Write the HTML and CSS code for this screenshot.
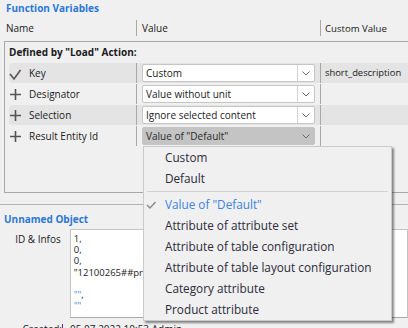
FILE: index.html
```html
<!DOCTYPE html>
<html>
<head>
<meta charset="utf-8">
<link rel="stylesheet" href="styles.css">
</head>
<body>
<section class="fv">
  <h2 class="title">Function Variables</h2>
  <div class="colhead">
    <div class="ch-name">Name</div>
    <div class="ch-sep"></div>
    <div class="ch-value">Value</div>
    <div class="ch-sep"></div>
    <div class="ch-custom">Custom Value</div>
  </div>
  <div class="table">
    <div class="group">Defined by "Load" Action:</div>
    <div class="rows">
      <div class="row hl">
        <div class="cell-name">
          <svg class="ico" width="14" height="20" viewBox="0 0 14 20"><polyline points="1,11 5,16 11.5,7" fill="none" stroke="#555" stroke-width="1.6"/></svg>
          <span>Key</span>
        </div>
        <div class="cell-value">
          <div class="combo"><span class="ctext">Custom</span><span class="arrow"><svg width="8" height="5" viewBox="0 0 8 5"><polyline points="0.5,0.5 4,4 7.5,0.5" fill="none" stroke="#6a6a6a" stroke-width="1"/></svg></span></div>
        </div>
        <div class="cell-custom">short_description</div>
      </div>
      <div class="row">
        <div class="cell-name">
          <svg class="ico" width="14" height="20" viewBox="0 0 14 20"><path d="M1 10.5H12M6.5 5V16" fill="none" stroke="#555" stroke-width="1.6"/></svg>
          <span>Designator</span>
        </div>
        <div class="cell-value">
          <div class="combo"><span class="ctext">Value without unit</span><span class="arrow"><svg width="8" height="5" viewBox="0 0 8 5"><polyline points="0.5,0.5 4,4 7.5,0.5" fill="none" stroke="#6a6a6a" stroke-width="1"/></svg></span></div>
        </div>
        <div class="cell-custom"></div>
      </div>
      <div class="row hl">
        <div class="cell-name">
          <svg class="ico" width="14" height="20" viewBox="0 0 14 20"><path d="M1 10.5H12M6.5 5V16" fill="none" stroke="#555" stroke-width="1.6"/></svg>
          <span>Selection</span>
        </div>
        <div class="cell-value">
          <div class="combo"><span class="ctext">Ignore selected content</span><span class="arrow"><svg width="8" height="5" viewBox="0 0 8 5"><polyline points="0.5,0.5 4,4 7.5,0.5" fill="none" stroke="#6a6a6a" stroke-width="1"/></svg></span></div>
        </div>
        <div class="cell-custom"></div>
      </div>
      <div class="row">
        <div class="cell-name">
          <svg class="ico" width="14" height="20" viewBox="0 0 14 20"><path d="M1 10.5H12M6.5 5V16" fill="none" stroke="#555" stroke-width="1.6"/></svg>
          <span>Result Entity Id</span>
        </div>
        <div class="cell-value">
          <div class="combo open"><span class="ctext">Value of "Default"</span><span class="arrow"><svg width="8" height="5" viewBox="0 0 8 5"><polyline points="0.5,0.5 4,4 7.5,0.5" fill="none" stroke="#6a6a6a" stroke-width="1"/></svg></span></div>
        </div>
        <div class="cell-custom"></div>
      </div>
    </div>
  </div>
</section>

<section class="obj">
  <h2 class="title obj-title">Unnamed Object</h2>
  <div class="field">
    <div class="label">ID &amp; Infos</div>
    <div class="ta">1,<br>0,<br>0,<br>"12100265##product_attribute_default<br>&nbsp;<br><span class="q">""</span>,<br><span class="q">""</span></div>
  </div>
  <div class="field created">
    <div class="label">Created:</div>
    <div class="caret"></div>
    <div class="val">05.07.2022 10:53 Admin</div>
  </div>
</section>

<div class="menu">
  <div class="item">Custom</div>
  <div class="item">Default</div>
  <div class="sep"></div>
  <div class="item sel"><svg class="mcheck" width="14" height="21" viewBox="0 0 14 21"><polyline points="3,11 6,14 11.5,8" fill="none" stroke="#8a8a8a" stroke-width="1.4"/></svg>Value of "Default"</div>
  <div class="item">Attribute of attribute set</div>
  <div class="item">Attribute of table configuration</div>
  <div class="item">Attribute of table layout configuration</div>
  <div class="item">Category attribute</div>
  <div class="item">Product attribute</div>
</div>
</body>
</html>
```

FILE: styles.css
```css
* { box-sizing: border-box; }
html, body { margin: 0; padding: 0; }
body {
  width: 408px;
  height: 328px;
  overflow: hidden;
  position: relative;
  background: #f0f0f0;
  font-family: "Open Sans", "Liberation Sans", sans-serif;
  font-size: 10px;
  color: #1a1a1a;
}

.title {
  margin: 0;
  height: 17px;
  line-height: 17px;
  padding-left: 6px;
  font-size: 10px;
  font-weight: 700;
  color: #2a78d6;
  white-space: nowrap;
}

.colhead {
  display: flex;
  align-items: center;
  height: 22px;
  margin-bottom: 2px;
  white-space: nowrap;
}
.ch-name { width: 136px; padding-left: 6px; }
.ch-sep { width: 1px; height: 16px; background: #a8a8a8; }
.ch-value { width: 183px; padding-left: 5px; }
.ch-custom { padding-left: 4px; font-size: 9.6px; }

.table {
  margin-left: 4px;
  height: 152px;
  border: 1px solid #a8a8a8;
  border-right: none;
}
.group {
  height: 21px;
  line-height: 21px;
  padding-left: 4px;
  font-weight: 700;
  white-space: nowrap;
}
.rows { display: flex; flex-direction: column; }
.row {
  display: flex;
  height: 21px;
  margin-left: 4px;
  padding-bottom: 1px;
  background-clip: content-box;
  border-radius: 4px 0 0 4px;
  white-space: nowrap;
}
.row.hl { background-color: #e4e4e4; }

.cell-name {
  width: 127px;
  display: flex;
  align-items: center;
}
.ico { flex: none; margin-right: 6px; }

.cell-value {
  width: 184px;
  border-left: 1px solid #a8a8a8;
  padding: 1px 5px 0 5px;
}
.cell-custom {
  flex: 1;
  border-left: 1px solid #a8a8a8;
  padding-left: 4px;
  line-height: 20px;
  font-size: 9.4px;
}

.combo {
  display: flex;
  height: 18px;
  background: #fff;
  border: 1px solid #c6c6c6;
  border-radius: 2px;
}
.ctext {
  flex: 1;
  padding-left: 3px;
  line-height: 16px;
  color: #222;
  overflow: hidden;
}
.arrow {
  width: 17px;
  border-left: 1px solid #d4d4d4;
  display: flex;
  align-items: center;
  justify-content: center;
}
.combo.open {
  background: #c4c4c4;
  border-color: #c4c4c4;
}
.combo.open .arrow { border-left: none; }
.combo.open .ctext { color: #2a2a2a; }

.obj {
  margin-top: 11px;
  border-top: 1px solid #b4b4b4;
}
.obj-title {
  margin-top: 6px;
  height: 16px;
  line-height: 16px;
  padding-left: 4px;
}
.field {
  display: flex;
  margin-top: 2px;
  white-space: nowrap;
}
.label {
  width: 62px;
  text-align: right;
  padding-top: 2px;
  line-height: 16px;
}
.ta {
  margin-left: 9px;
  width: 345px;
  height: 89px;
  background: #fff;
  border: 1px solid #c4c4c4;
  border-bottom-color: #a8a8a8;
  padding: 3px 3px;
  line-height: 11.2px;
  font-size: 9.5px;
  overflow: hidden;
}
.q { color: #4a8fd8; }
.created { margin-top: 1px; }
.created .label { padding-top: 2px; }
.caret {
  width: 1px;
  height: 10px;
  margin-top: 5px;
  background: #7a1f8a;
}
.val { margin-left: 7px; padding-top: 2px; line-height: 16px; }

.menu {
  position: absolute;
  left: 143px;
  top: 146px;
  width: 249px;
  background: #f0f0f0;
  border: 1px solid #cacaca;
  box-shadow: 2px 2px 2px rgba(0, 0, 0, 0.45);
  font-size: 11.75px;
  color: #2c2c3a;
}
.item {
  position: relative;
  height: 21px;
  line-height: 21px;
  padding-left: 21px;
  white-space: nowrap;
}
.item.sel { color: #3a84e2; }
.mcheck { position: absolute; left: 0; top: 0; }
.sep {
  height: 5px;
  margin: 0 3px;
  background: linear-gradient(#d2d2d2, #d2d2d2) center / 100% 1px no-repeat;
}
```
